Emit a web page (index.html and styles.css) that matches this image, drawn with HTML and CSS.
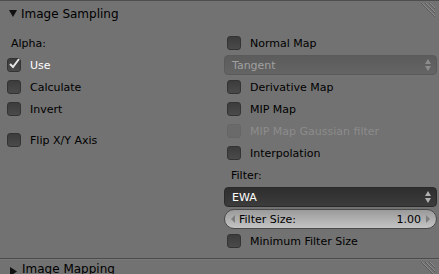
FILE: index.html
```html
<!DOCTYPE html>
<html lang="en">
<head>
  <meta charset="UTF-8">
  <title>Image Sampling</title>
  <link rel="stylesheet" href="styles.css">
</head>
<body>
  <div class="panel">
    <div class="header">
      <svg class="tri" width="9" height="9" viewBox="0 0 9 9"><path d="M0 1 L8 1 L4 8 Z" fill="#111"/></svg>
      <span class="title">Image Sampling</span>
      <svg class="grip" width="18" height="18" viewBox="0 0 18 18">
        <path d="M4 0 L18 14 M8 0 L18 10 M12 0 L18 6" stroke="#5a5a5a" stroke-width="1"/>
        <path d="M5 0 L18 13 M9 0 L18 9 M13 0 L18 5" stroke="#8c8c8c" stroke-width="1"/>
      </svg>
    </div>
    <div class="cols">
      <div class="col">
        <div class="row label">Alpha:</div>
        <div class="row check on"><span class="box"><svg width="14" height="14" viewBox="0 0 14 14"><path d="M3 7 L6 10 L12 2" stroke="#e6e6e6" stroke-width="2" fill="none"/></svg></span>Use</div>
        <div class="row check"><span class="box"></span>Calculate</div>
        <div class="row check"><span class="box"></span>Invert</div>
        <div class="gap"></div>
        <div class="row check"><span class="box"></span>Flip X/Y Axis</div>
      </div>
      <div class="col">
        <div class="row check"><span class="box"></span>Normal Map</div>
        <div class="row"><div class="menu off">Tangent<span class="updown"></span></div></div>
        <div class="row check"><span class="box"></span>Derivative Map</div>
        <div class="row check"><span class="box"></span>MIP Map</div>
        <div class="row check off"><span class="box"></span>MIP Map Gaussian filter</div>
        <div class="row check"><span class="box"></span>Interpolation</div>
        <div class="row label">Filter:</div>
        <div class="row"><div class="menu dark">EWA<span class="updown"></span></div></div>
        <div class="row"><div class="slider"><span class="arrow left"></span><span class="name">Filter Size:</span><span class="value">1.00</span><span class="arrow right"></span></div></div>
        <div class="row check"><span class="box"></span>Minimum Filter Size</div>
      </div>
    </div>
  </div>
  <div class="next">
    <svg class="tri" width="9" height="9" viewBox="0 0 9 9"><path d="M1 0 L8 4.5 L1 9 Z" fill="#111"/></svg>
    <span class="title">Image Mapping</span>
    <svg class="grip" width="18" height="18" viewBox="0 0 18 18">
      <path d="M4 0 L18 14 M8 0 L18 10 M12 0 L18 6" stroke="#5a5a5a" stroke-width="1"/>
      <path d="M5 0 L18 13 M9 0 L18 9 M13 0 L18 5" stroke="#8c8c8c" stroke-width="1"/>
    </svg>
  </div>
</body>
</html>
```

FILE: styles.css
```css
body {
  margin: 0;
  background: #727272;
  font-family: "DejaVu Sans", sans-serif;
  font-size: 11px;
  color: #000;
  overflow: hidden;
}
.panel {
  border-top: 1px solid #4e4e4e;
  height: 257px;
  border-bottom: 1px solid #4b4b4b;
}
.header {
  height: 25px;
  display: flex;
  align-items: center;
  padding-left: 9px;
  margin-bottom: 6px;
  position: relative;
}
.title {
  font-size: 12px;
  margin-left: 3px;
  color: #000;
}
.grip {
  position: absolute;
  right: 4px;
  top: 2px;
}
.cols {
  display: flex;
  gap: 7px;
  padding: 0 2px 0 4px;
}
.col {
  width: 213px;
  display: flex;
  flex-direction: column;
}
.row {
  height: 22px;
  display: flex;
  align-items: center;
}
.label {
  padding-left: 7px;
}
.gap {
  height: 9px;
}
.check {
  padding-left: 3px;
}
.box {
  width: 12px;
  height: 12px;
  border: 1px solid #333;
  border-radius: 3px;
  background: linear-gradient(#3c3c3c, #4a4a4a);
  margin-right: 9px;
  position: relative;
  flex: none;
}
.box svg {
  position: absolute;
  left: -1px;
  top: -2px;
}
.on {
  color: #fff;
}
.check.off {
  color: #8c8c8c;
}
.check.off .box {
  background: #6a6a6a;
  border-color: #666;
}
.menu {
  flex: 1;
  height: 18px;
  border-radius: 4px;
  display: flex;
  align-items: center;
  padding-left: 7px;
  position: relative;
}
.menu.off {
  background: linear-gradient(#5c5c5c, #646464);
  border: 1px solid #5a5a5a;
  color: #a0a0a0;
}
.menu.dark {
  background: linear-gradient(#2e2e2e, #3c3c3c);
  border: 1px solid #2a2a2a;
  color: #fff;
}
.updown {
  position: absolute;
  right: 5px;
  top: 3px;
  width: 0;
  height: 0;
  border-left: 3px solid transparent;
  border-right: 3px solid transparent;
  border-bottom: 5px solid #b0b0b0;
}
.updown::after {
  content: "";
  position: absolute;
  left: -3px;
  top: 7px;
  border-left: 3px solid transparent;
  border-right: 3px solid transparent;
  border-top: 5px solid #b0b0b0;
}
.menu.off .updown,
.menu.off .updown::after {
  border-bottom-color: #8c8c8c;
  border-top-color: #8c8c8c;
}
.slider {
  flex: 1;
  height: 18px;
  border: 1px solid #4a4a4a;
  border-radius: 10px;
  background: linear-gradient(#9a9a9a, #c4c4c4);
  display: flex;
  align-items: center;
  padding: 0 6px;
}
.arrow {
  width: 0;
  height: 0;
  border-top: 4px solid transparent;
  border-bottom: 4px solid transparent;
}
.arrow.left {
  border-right: 4px solid #7e7e7e;
}
.arrow.right {
  border-left: 4px solid #7e7e7e;
}
.name {
  margin-left: 4px;
  flex: 1;
}
.value {
  margin-right: 5px;
}
.next {
  height: 16px;
  display: flex;
  align-items: flex-end;
  padding-left: 9px;
  position: relative;
  border-top: 1px solid #7a7a7a;
}
.next .title {
  margin-left: 4px;
  line-height: 13px;
}
.next .grip {
  top: 2px;
}
```
